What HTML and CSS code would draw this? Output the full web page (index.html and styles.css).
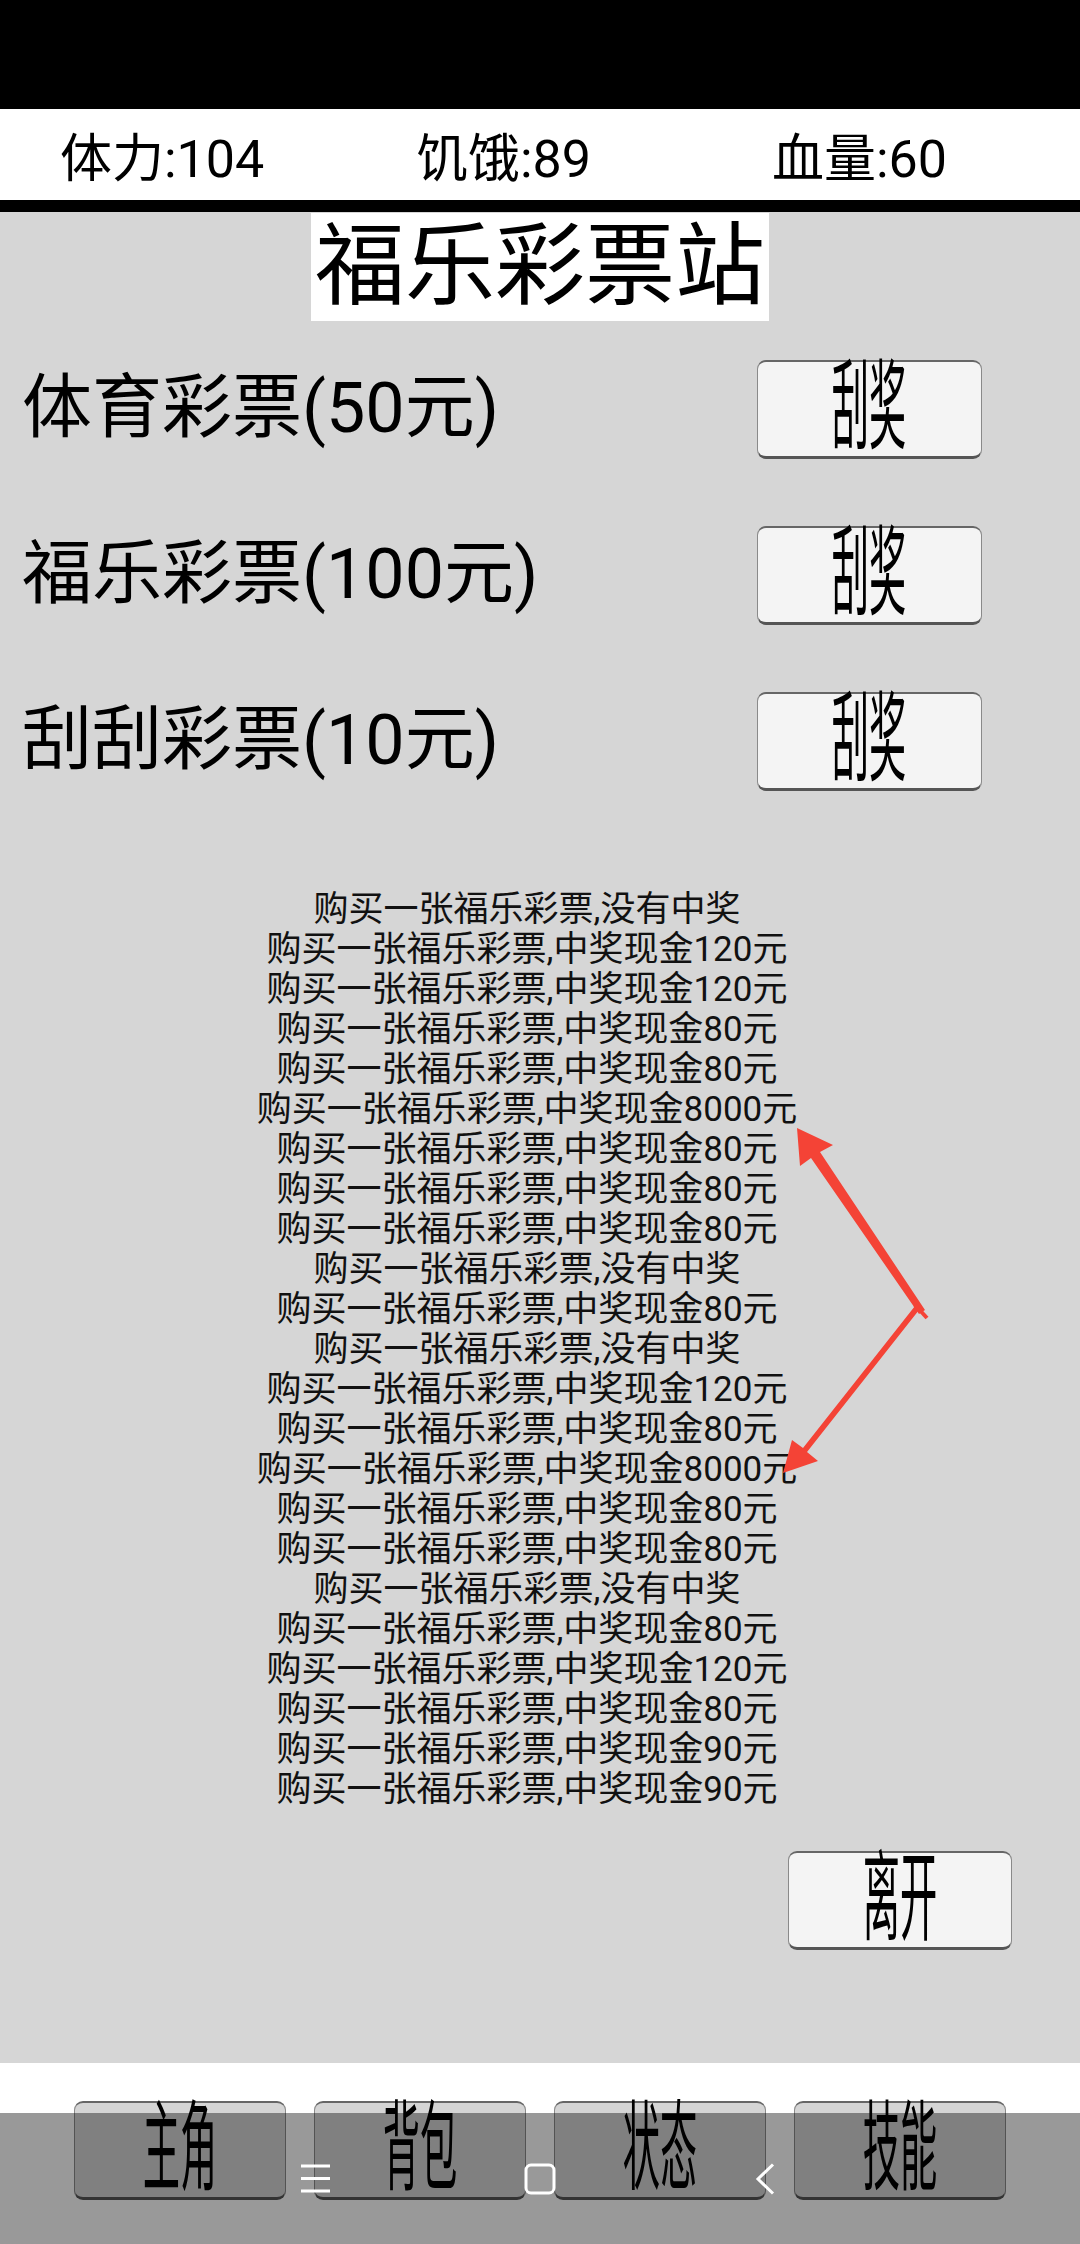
FILE: index.html
```html
<!DOCTYPE html>
<html lang="zh-CN">
<head>
    <meta charset="UTF-8">
    <meta name="viewport" content="width=device-width, initial-scale=1.0">
    <title>福乐彩票站</title>
    <link rel="stylesheet" href="styles.css">
</head>
<body>
    <div class="screen">
        <div class="status-bar"></div>

        <div class="stats">
            <span>体力:104</span>
            <span>饥饿:89</span>
            <span>血量:60</span>
        </div>

        <main class="shop">
            <h1 class="shop-title">福乐彩票站</h1>

            <div class="tickets">
                <div class="ticket">
                    <span class="ticket-name">体育彩票(50元)</span>
                    <button class="btn"><span class="btn-label">刮奖</span></button>
                </div>
                <div class="ticket">
                    <span class="ticket-name">福乐彩票(100元)</span>
                    <button class="btn"><span class="btn-label">刮奖</span></button>
                </div>
                <div class="ticket">
                    <span class="ticket-name">刮刮彩票(10元)</span>
                    <button class="btn"><span class="btn-label">刮奖</span></button>
                </div>
            </div>

            <div class="log-wrap">
                <div class="log" id="log"></div>
                <!-- red pointers to the two big wins -->
                <svg class="marks" viewBox="0 0 1080 920" preserveAspectRatio="none">
                    <polygon points="797,238 833,255 820,262 925,420 919,424 811,268 800,276" fill="#f44336"/>
                    <polygon points="783,583 818,571 807,562 919,420 915,416 803,558 792,550" fill="#f44336"/>
                    <line x1="915" y1="415" x2="927" y2="428" stroke="#f44336" stroke-width="4"/>
                </svg>
            </div>

            <div class="leave-row">
                <button class="btn"><span class="btn-label">离开</span></button>
            </div>
        </main>

        <footer class="menu">
            <button class="btn btn-menu"><span class="btn-label">主角</span></button>
            <button class="btn btn-menu"><span class="btn-label">背包</span></button>
            <button class="btn btn-menu"><span class="btn-label">状态</span></button>
            <button class="btn btn-menu"><span class="btn-label">技能</span></button>
        </footer>

        <div class="sys-nav">
            <svg class="nav-icon" viewBox="0 0 40 40">
                <path d="M6 7h29M6 19.5h29M6 32h29" stroke="#fff" stroke-width="3" fill="none"/>
            </svg>
            <svg class="nav-icon" viewBox="0 0 40 40">
                <rect x="6" y="6" width="28" height="28" rx="5" stroke="#fff" stroke-width="3" fill="none"/>
            </svg>
            <svg class="nav-icon" viewBox="0 0 40 40">
                <path d="M28 5.5L13 20l15 14.5" stroke="#fff" stroke-width="3" fill="none"/>
            </svg>
        </div>
    </div>

    <script>
        // purchase history, newest last
        const history = [
            '没有中奖', '中奖现金120元', '中奖现金120元', '中奖现金80元', '中奖现金80元',
            '中奖现金8000元', '中奖现金80元', '中奖现金80元', '中奖现金80元', '没有中奖',
            '中奖现金80元', '没有中奖', '中奖现金120元', '中奖现金80元', '中奖现金8000元',
            '中奖现金80元', '中奖现金80元', '没有中奖', '中奖现金80元', '中奖现金120元',
            '中奖现金80元', '中奖现金90元', '中奖现金90元'
        ];

        const log = document.getElementById('log');
        history.forEach(function(result) {
            const line = document.createElement('div');
            line.textContent = '购买一张福乐彩票,' + result;
            log.appendChild(line);
        });
    </script>
</body>
</html>
```

FILE: styles.css
```css
html, body {
    margin: 0;
    padding: 0;
}
body {
    font-family: Roboto, "Noto Sans CJK SC", sans-serif;
    color: #000;
    background-color: #000;
}
.screen {
    position: relative;
    width: 1080px;
    height: 2244px;
    overflow: hidden;
    display: flex;
    flex-direction: column;
}
.status-bar {
    height: 109px;
    background-color: #000;
}
.stats {
    height: 91px;
    background-color: #fff;
    border-bottom: 12px solid #000;
    display: grid;
    grid-template-columns: 356px 356px 356px;
    align-items: center;
    padding-left: 60px;
    font-size: 52px;
}
.shop {
    height: 1851px;
    background-color: #d6d6d6;
    display: flex;
    flex-direction: column;
    align-items: center;
}
.shop-title {
    margin: 1px 0 0 0;
    padding: 0 4px;
    background-color: #fff;
    font-size: 90px;
    font-weight: normal;
    line-height: 108px;
    height: 108px;
}
.tickets {
    align-self: stretch;
    margin-top: 39px;
    display: flex;
    flex-direction: column;
    gap: 67px;
}
.ticket {
    display: flex;
    align-items: center;
    justify-content: space-between;
    padding: 0 98px 0 22px;
}
.ticket-name {
    font-size: 70px;
    line-height: 1.2;
    margin-bottom: 4px;
    white-space: nowrap;
}
.btn {
    box-sizing: border-box;
    width: 225px;
    height: 99px;
    padding: 0;
    background-color: #f4f4f4;
    border: 1px solid #8a8a8a;
    border-top: 2px solid #666;
    border-bottom: 3px solid #555;
    border-radius: 9px;
    display: flex;
    align-items: center;
    justify-content: center;
    font-family: "Noto Sans CJK SC", sans-serif;
    color: #000;
}
.btn-label {
    display: inline-block;
    font-size: 98px;
    line-height: 1;
    margin-bottom: 22px;
    transform: scaleX(0.38);
    white-space: nowrap;
}
.log-wrap {
    position: relative;
    align-self: stretch;
    margin-top: 99px;
}
.log {
    padding-right: 26px;
    text-align: center;
    font-size: 35px;
    line-height: 40px;
    color: #111;
}
.marks {
    position: absolute;
    left: 0;
    top: 0;
    width: 100%;
    height: 100%;
}
.leave-row {
    align-self: stretch;
    display: flex;
    justify-content: flex-end;
    padding-right: 68px;
    margin-top: 41px;
}
.leave-row .btn {
    width: 224px;
}
.menu {
    height: 181px;
    box-sizing: border-box;
    background-color: #fff;
    padding-top: 38px;
    display: flex;
    justify-content: center;
    align-items: flex-start;
    gap: 28px;
}
.btn-menu {
    width: 212px;
    background-color: #d5d5d5;
}
.sys-nav {
    position: absolute;
    left: 0;
    right: 0;
    bottom: 0;
    height: 131px;
    background-color: rgba(0, 0, 0, 0.4);
    display: flex;
    justify-content: center;
    align-items: center;
    gap: 185px;
}
.nav-icon {
    width: 40px;
    height: 40px;
}
```
